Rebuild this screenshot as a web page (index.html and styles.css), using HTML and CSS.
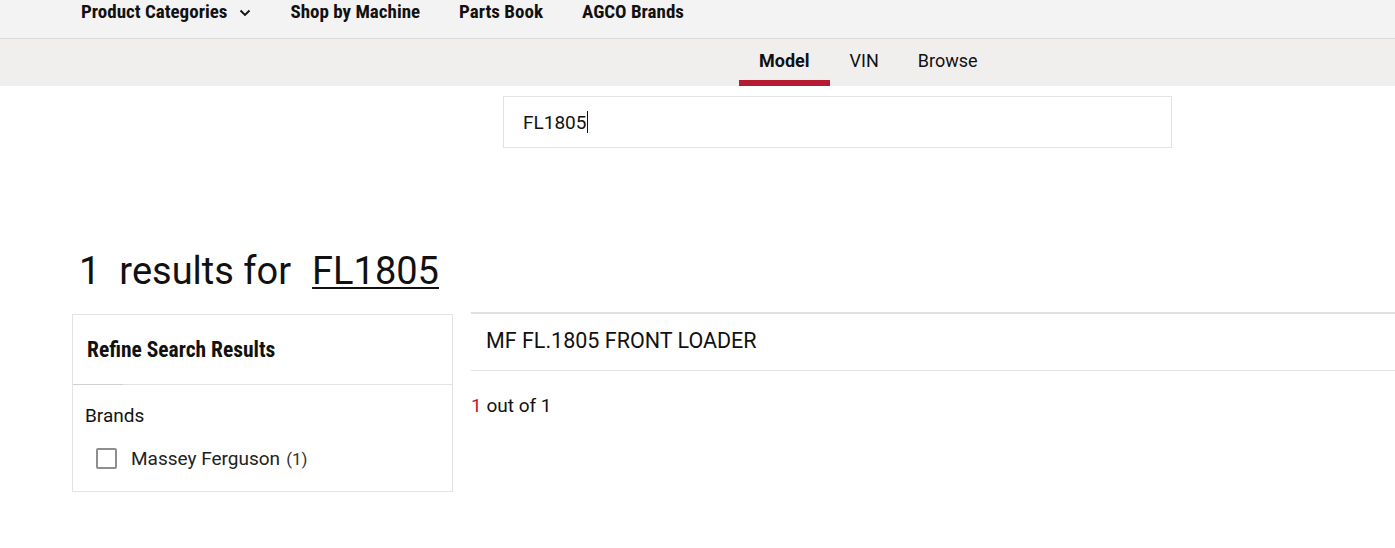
FILE: index.html
```html
<!DOCTYPE html>
<html>
<head>
<meta charset="utf-8">
<link rel="stylesheet" href="styles.css">
</head>
<body>
<header class="topnav">
  <a class="topnav-item">Product Categories
    <svg class="chev" width="12" height="8" viewBox="0 0 12 8"><path d="M1.5 1.5 L6 6 L10.5 1.5" fill="none" stroke="#111" stroke-width="1.8"/></svg>
  </a>
  <a class="topnav-item">Shop by Machine</a>
  <a class="topnav-item">Parts Book</a>
  <a class="topnav-item">AGCO Brands</a>
</header>
<nav class="tabs">
  <a class="tab active">Model</a>
  <a class="tab">VIN</a>
  <a class="tab">Browse</a>
</nav>
<div class="search-row">
  <div class="search-box"><span class="search-text">FL1805</span><span class="caret"></span></div>
</div>
<main class="results">
  <h1 class="results-title"><span class="count">1</span><span class="label">results for</span><a class="query">FL1805</a></h1>
  <div class="results-body">
    <aside class="refine">
      <div class="refine-head">Refine Search Results</div>
      <div class="refine-divider"><span class="refine-divider-accent"></span></div>
      <div class="facet">
        <div class="facet-title">Brands</div>
        <label class="facet-option"><span class="checkbox"></span><span class="facet-name">Massey Ferguson</span><span class="facet-count">(1)</span></label>
      </div>
    </aside>
    <section class="list">
      <div class="list-item">MF FL.1805 FRONT LOADER</div>
      <div class="pager"><span class="pager-current">1</span> out of 1</div>
    </section>
  </div>
</main>
</body>
</html>
```
FILE: styles.css
```css
* { box-sizing: border-box; }
html, body { margin: 0; padding: 0; background: #fff; }
body { font-family: Roboto, "Noto Sans", "Liberation Sans", sans-serif; color: #111; width: 1395px; overflow: hidden; }
a { color: inherit; text-decoration: none; }

.topnav {
  height: 39px;
  background: #f3f3f3;
  border-bottom: 1px solid #dcdcdc;
  display: flex;
  align-items: flex-start;
  padding-left: 81px;
  gap: 39px;
}
.topnav-item {
  font-family: "Roboto Condensed", "Liberation Sans Narrow", Roboto, sans-serif;
  font-weight: 700;
  font-size: 19px;
  line-height: 24px;
  color: #111;
  display: flex;
  align-items: center;
  gap: 12px;
}
.chev { margin-top: 1px; }

.tabs {
  height: 47px;
  background: #f0efee;
  display: flex;
  padding-left: 739px;
}
.tab {
  padding: 12px 19px 0 20px;
  font-size: 18px;
  line-height: 20px;
  color: #111;
  position: relative;
}
.tab.active { font-weight: 700; padding-right: 20px; }
.tab.active::after {
  content: "";
  position: absolute;
  left: 0; right: 0; bottom: 0;
  height: 6px;
  background: #b51c33;
}

.search-row { padding: 10px 0 0 503px; }
.search-box {
  width: 669px;
  height: 52px;
  border: 1px solid #e3e3e3;
  display: flex;
  align-items: center;
  padding-left: 19px;
  font-size: 19px;
}
.caret { width: 1px; height: 22px; background: #111; margin-left: 1px; }

.results { padding: 101px 0 0 72px; }
.results-title {
  margin: 0 0 0 7px;
  font-weight: 400;
  font-size: 38px;
  line-height: 44px;
  display: flex;
  color: #111;
}
.count { margin-right: 19px; }
.label { margin-right: 21px; }
.query { text-decoration: underline; text-decoration-thickness: 2px; text-underline-offset: 3px; }

.results-body { display: flex; margin-top: 19px; align-items: flex-start; }
.refine {
  width: 381px;
  border: 1px solid #e3e3e3;
  margin-top: 2px;
}
.refine-head {
  font-family: "Roboto Condensed", "Liberation Sans Narrow", Roboto, sans-serif;
  font-weight: 700;
  font-size: 21.5px;
  height: 69px;
  display: flex;
  align-items: center;
  padding-left: 14px;
}
.refine-divider { height: 1px; background: #e3e3e3; display: flex; }
.refine-divider-accent { width: 50px; background: #d0d0d0; }
.facet { padding: 19px 12px 21px 12px; }
.facet-title { font-size: 19px; line-height: 24px; }
.facet-option { display: flex; align-items: center; margin-top: 19px; padding-left: 11px; font-size: 19px; }
.checkbox { width: 21px; height: 21px; border: 2px solid #8e8e8e; border-radius: 2px; margin-right: 14px; }
.facet-name { color: #222; }
.facet-count { font-size: 17px; color: #333; margin-left: 6px; }

.list { flex: 1; margin-left: 18px; }
.list-item {
  border-top: 2px solid #e0e0e0;
  border-bottom: 1px solid #e3e3e3;
  height: 59px;
  display: flex;
  align-items: center;
  padding: 0 0 3px 15px;
  font-size: 21.5px;
}
.pager {
  margin-top: 23px;
  font-size: 19px;
}
.pager-current { color: #b51c33; }
```
